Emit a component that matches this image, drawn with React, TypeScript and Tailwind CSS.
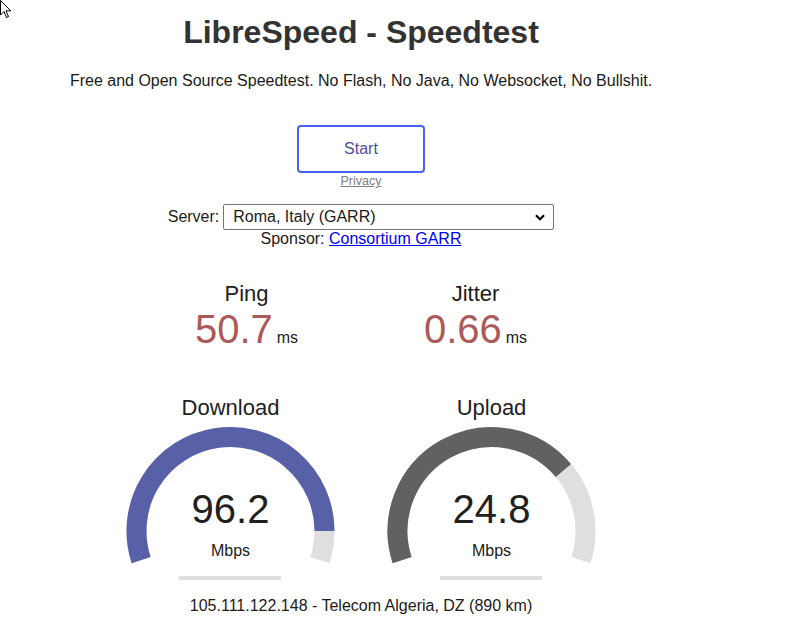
import React from "react";

const CX = 130.5;
const CY = 110;
const R = 94;

function pt(deg: number) {
  const a = (deg * Math.PI) / 180;
  return [CX + R * Math.cos(a), CY + R * Math.sin(a)];
}

function arc(frac: number) {
  const start = 162;
  const sweep = 216 * frac;
  const [x1, y1] = pt(start);
  const [x2, y2] = pt(start + sweep);
  const large = sweep > 180 ? 1 : 0;
  return `M ${x1} ${y1} A ${R} ${R} 0 ${large} 1 ${x2} ${y2}`;
}

interface GaugeProps {
  label: string;
  value: string;
  amount: number;
  color: string;
}

const Gauge: React.FC<GaugeProps> = ({ label, value, amount, color }) => {
  return (
    <div className="w-[261px] flex flex-col items-center">
      <div className="text-[22px] leading-[26px] text-[#202020]">{label}</div>
      <div className="relative w-[261px] h-[160px]">
        <svg className="absolute inset-0" width="261" height="160">
          <path d={arc(1)} fill="none" stroke="#dfdfdf" strokeWidth="20" />
          <path d={arc(amount)} fill="none" stroke={color} strokeWidth="20" />
          <rect x="79" y="155" width="102" height="4" fill="#dfdfdf" />
        </svg>
        <div className="absolute left-0 right-0 top-[66px] text-center text-[40px] leading-[44px] text-[#202020]">
          {value}
        </div>
        <div className="absolute left-0 right-0 top-[121px] text-center text-[16px] leading-[18px] text-[#202020]">
          Mbps
        </div>
      </div>
    </div>
  );
};

const Small: React.FC<{ label: string; value: string }> = ({ label, value }) => (
  <div className="w-[229px] flex flex-col items-center">
    <div className="text-[22px] leading-[26px] text-[#202020]">{label}</div>
    <div className="leading-[44px]">
      <span className="text-[40px] text-[#aa5a5a]">{value}</span>
      <span className="text-[16px] text-[#202020] ml-1">ms</span>
    </div>
  </div>
);

export default function App() {
  return (
    <div
      className="relative w-[805px] h-[626px] bg-white overflow-hidden"
      style={{ fontFamily: '"Liberation Sans", Arial, sans-serif' }}
    >
      {/* mouse cursor */}
      <svg className="absolute left-0 top-0" width="14" height="20" viewBox="0 0 14 20">
        <path d="M0.5 0.5 L0.5 15 L4 11.5 L6.5 17.5 L8.5 16.6 L6 10.8 L10.8 10.8 Z" fill="#fff" stroke="#000" strokeWidth="1" />
      </svg>

      <div className="w-[722px] flex flex-col items-center text-center">
        <h1 className="mt-[14px] text-[32px] leading-[37px] font-bold text-[#333333]">
          LibreSpeed - Speedtest
        </h1>
        <p className="mt-[21px] text-[16px] leading-[18px] text-[#1a1a1a]">
          Free and Open Source Speedtest. No Flash, No Java, No Websocket, No Bullshit.
        </p>

        <button className="mt-[35px] w-[128px] h-[48px] border-2 border-[#4563f0] rounded-[4px] text-[16px] text-[#50509a] bg-white">
          Start
        </button>
        <a className="text-[12.5px] leading-[14px] text-[#808080] underline mt-[1px]">Privacy</a>

        <div className="mt-[16px] flex items-center gap-[4px] text-[16px] text-[#1a1a1a]">
          <span>Server:</span>
          <div className="relative w-[331px] h-[26px] border border-[#767676] rounded-[2px] flex items-center pl-[9px] text-left">
            <span>Roma, Italy (GARR)</span>
            <svg className="absolute right-[8px] top-[9px]" width="10" height="7" viewBox="0 0 10 7">
              <path d="M1 1.2 L5 5.2 L9 1.2" fill="none" stroke="#000" strokeWidth="2.2" />
            </svg>
          </div>
        </div>
        <div className="text-[16px] leading-[18px] text-[#1a1a1a]">
          Sponsor: <a className="text-[#0000ee] underline">Consortium GARR</a>
        </div>

        <div className="mt-[33px] flex">
          <Small label="Ping" value="50.7" />
          <Small label="Jitter" value="0.66" />
        </div>

        <div className="mt-[35px] flex">
          <Gauge label="Download" value="96.2" amount={0.9167} color="#5860a8" />
          <Gauge label="Upload" value="24.8" amount={0.731} color="#616161" />
        </div>

        <div className="mt-[16px] text-[16px] leading-[18px] text-[#1a1a1a]">
          105.111.122.148 - Telecom Algeria, DZ (890 km)
        </div>
      </div>
    </div>
  );
}
